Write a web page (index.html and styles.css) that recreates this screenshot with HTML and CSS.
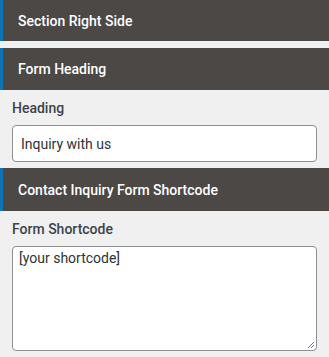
FILE: index.html
```html
<!DOCTYPE html>
<html>
<head>
<meta charset="utf-8">
<link rel="stylesheet" href="styles.css">
</head>
<body>
<div class="panel">
  <div class="bar bar-first">Section Right Side</div>
  <div class="bar">Form Heading</div>
  <div class="field">
    <label class="label">Heading</label>
    <div class="input">Inquiry with us</div>
  </div>
  <div class="bar bar-tight">Contact Inquiry Form Shortcode</div>
  <div class="field">
    <label class="label">Form Shortcode</label>
    <div class="textarea">[your shortcode]<svg class="grip" width="8" height="8" viewBox="0 0 8 8"><path d="M7 1L1 7M7 4L4 7" stroke="#777" stroke-width="1"/></svg></div>
  </div>
</div>
</body>
</html>
```
FILE: styles.css
```css
html, body {
  margin: 0;
  padding: 0;
  background: #f0f0f1;
}
body {
  font-family: Roboto, "Noto Sans", sans-serif;
  width: 329px;
  height: 357px;
  overflow: hidden;
}
.panel {
  display: flex;
  flex-direction: column;
}
.bar {
  background: #4b4846;
  color: #ffffff;
  font-size: 14px;
  font-weight: 500;
  height: 42px;
  display: flex;
  align-items: center;
  padding-left: 15px;
  border-left: 3px solid #0e74b8;
  box-sizing: border-box;
}
.bar-first {
  height: 41px;
  margin-bottom: 7px;
}
.bar-tight {
  height: 43px;
}
.field {
  padding: 0 12px 0 12px;
  display: flex;
  flex-direction: column;
}
.label {
  color: #3c434a;
  font-size: 14px;
  font-weight: 500;
  height: 35px;
  display: flex;
  align-items: center;
}
.input {
  background: #fff;
  border: 1px solid #8c8f94;
  border-radius: 4px;
  height: 37px;
  box-sizing: border-box;
  display: flex;
  align-items: center;
  padding-left: 8px;
  font-size: 14px;
  color: #2c3338;
  margin-bottom: 6px;
}
.textarea {
  position: relative;
  background: #fff;
  border: 1px solid #8c8f94;
  border-radius: 4px;
  height: 105px;
  box-sizing: border-box;
  padding: 2px 6px;
  font-size: 14px;
  line-height: 18px;
  color: #2c3338;
}
.grip {
  position: absolute;
  right: 1px;
  bottom: 1px;
}
```
